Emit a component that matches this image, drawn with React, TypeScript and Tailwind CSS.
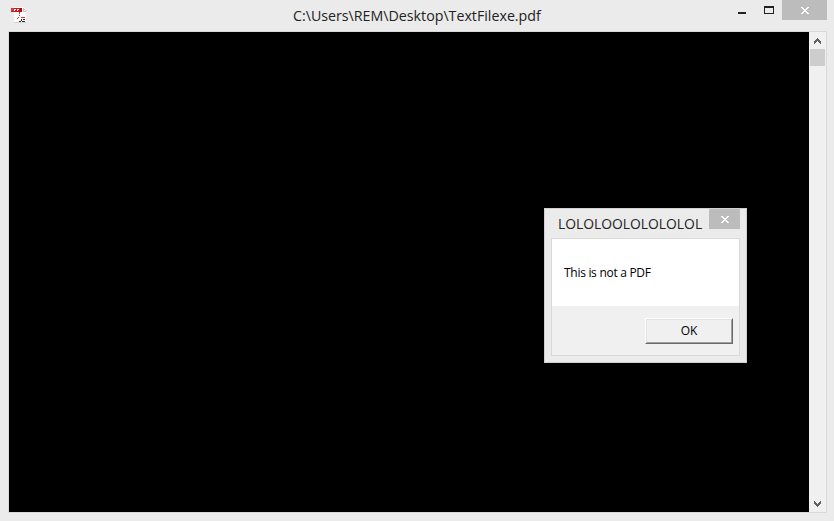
import React from "react";

function CloseGlyph() {
  return (
    <svg width="8" height="7" viewBox="0 0 8 7" shapeRendering="crispEdges" className="block fill-white">
      <path d="M0 0h2v1h1v1h2v-1h1v-1h2v1h-1v1h-1v1h-1v1h1v1h1v1h1v1h-2v-1h-1v-1h-2v1h-1v1h-2v-1h1v-1h1v-1h1v-1h-1v-1h-1v-1h-1z" />
    </svg>
  );
}

function Chevron({ down = false }: { down?: boolean }) {
  return (
    <svg
      width="7"
      height="6"
      viewBox="0 0 7 6"
      shapeRendering="crispEdges"
      className={down ? "block rotate-180 fill-[#606060]" : "block fill-[#606060]"}
    >
      <path d="M3 0h1v1h1v1h1v1h1v3h-1v-1h-1v-1h-1v-1h-1v1h-1v1h-1v1h-1v-3h1v-1h1v-1h1z" />
    </svg>
  );
}

function PdfIcon() {
  return (
    <svg width="16" height="16" viewBox="0 0 16 16" shapeRendering="crispEdges" className="block">
      <path d="M3 0h9l3 3v12H3z" fill="#fbfbfb" />
      <path d="M3 15h12v1H3z" fill="#d6d6d6" />
      <path d="M12 1h1v1h1v1h1v2h-3z" fill="#c4c4c4" />
      <path d="M13 3h1v1h-1z" fill="#fff" />
      <path d="M0 1h11v4H0z" fill="#cf1717" />
      <path d="M0 1h3v3H0z" fill="#dc3a34" />
      <path d="M9 1h2v4H9z" fill="#a90e0e" />
      <path d="M3 2h2v1H4v1H3zM6 2h1v2H6zM7 2h1v1H7z" fill="#fff" />
      <path d="M8 5h1v2H8zM8 8h1v1H8zM7 10h1v1H7zM10 10h4v1h-4zM6 11h1v1H6z" fill="#c93131" />
      <path d="M10 12h1v2h-1zM8 14h2v1H8zM11 14h3v1h-3zM12 12h2v1h-2z" fill="#222" />
    </svg>
  );
}

function MessageBox() {
  return (
    <div className="absolute left-[544px] top-[208px] flex h-[155px] w-[203px] flex-col border border-[#d0d0d0] bg-[#ebebeb] px-1.5 pb-1.5">
      <div className="flex h-[29px] shrink-0 justify-between">
        <div className="ml-[7px] mt-[4px] w-[144px] origin-left scale-x-[0.924] whitespace-nowrap text-[15px] leading-[20px] text-[#222]">
          LOLOLOOLOLOLOLOL
        </div>
        <button className="flex h-5 w-[31px] shrink-0 justify-center bg-[#bcbcbc] pt-[7px]" aria-label="Close">
          <CloseGlyph />
        </button>
      </div>
      <div className="flex grow flex-col border border-[#d9d9d9] bg-[#f0f0f0]">
        <div className="h-[67px] bg-white pl-3 pt-[26px] text-[12px] leading-4 tracking-[-0.29px] text-black">
          This is not a PDF
        </div>
        <div className="flex justify-end pr-[6px] pt-3">
          <button className="h-[26px] w-[88px] border border-b-[#696969] border-l-white border-r-[#696969] border-t-white">
            <span className="flex h-full items-center justify-center border border-b-[#a0a0a0] border-l-[#e3e3e3] border-r-[#a0a0a0] border-t-[#e3e3e3] text-[12px] leading-4 tracking-[-0.2px] text-black">
              OK
            </span>
          </button>
        </div>
      </div>
    </div>
  );
}

export default function App() {
  return (
    <div className="relative flex h-[521px] w-[834px] flex-col overflow-hidden bg-[#ebebeb] pb-2 pl-2 font-['Open_Sans','Noto_Sans',sans-serif]">
      <header className="flex h-[31px] w-[819px] shrink-0">
        <div className="w-[285px] pl-[3px] pt-[7px]">
          <PdfIcon />
        </div>
        <h1 className="mt-[5px] w-[445px] origin-left scale-x-[0.948] whitespace-nowrap text-[15px] leading-[20px] text-[#222]">
          C:\Users\REM\Desktop\TextFilexe.pdf
        </h1>
        <div className="mt-3 h-0.5 w-2 bg-[#222]" />
        <div className="ml-[18px] mt-1.5 h-2 w-2.5 border border-t-2 border-[#222]" />
        <button className="ml-2 flex h-5 w-[45px] shrink-0 justify-center bg-[#bcbcbc] pt-[7px]" aria-label="Close">
          <CloseGlyph />
        </button>
      </header>
      <main className="flex h-[482px] w-[819px] border border-[#d9d9d9]">
        <div className="w-[800px] bg-black" />
        <div className="flex grow flex-col items-center justify-between bg-[#f0f0f0] pb-[5px] pr-px pt-1.5">
          <div className="flex flex-col items-center gap-[5px]">
            <Chevron />
            <div className="h-[17px] w-[15px] bg-[#cdcdcd]" />
          </div>
          <Chevron down />
        </div>
      </main>
      <MessageBox />
    </div>
  );
}
